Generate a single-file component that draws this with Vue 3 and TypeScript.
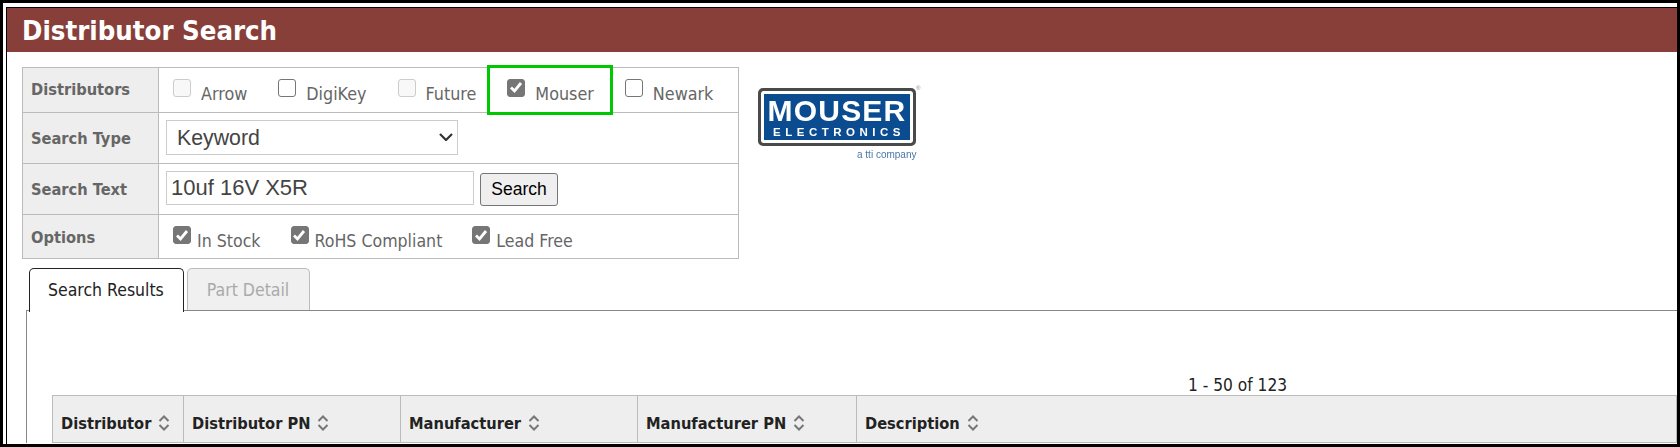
<script setup lang="ts">
interface Check {
  label: string;
  checked?: boolean;
  disabled?: boolean;
  highlight?: boolean;
}

const distributors: Check[] = [
  { label: 'Arrow', disabled: true },
  { label: 'DigiKey' },
  { label: 'Future', disabled: true },
  { label: 'Mouser', checked: true, highlight: true },
  { label: 'Newark' },
];

const options: Check[] = [
  { label: 'In Stock', checked: true },
  { label: 'RoHS Compliant', checked: true },
  { label: 'Lead Free', checked: true },
];

const columns = [
  { label: 'Distributor', width: 131 },
  { label: 'Distributor PN', width: 217 },
  { label: 'Manufacturer', width: 237 },
  { label: 'Manufacturer PN', width: 219 },
  { label: 'Description', width: 0 },
];
</script>

<template>
  <div class="frame">
    <div class="page">
      <div class="inner">
        <h1 class="banner">Distributor Search</h1>

        <div class="top">
          <div class="form">
            <div class="row row-dist">
              <div class="label">Distributors</div>
              <div class="cell dist-cell">
                <label
                  v-for="d in distributors"
                  :key="d.label"
                  class="dist"
                  :class="{ picked: d.highlight }"
                >
                  <span class="box" :class="{ on: d.checked, off: d.disabled }">
                    <svg v-if="d.checked" viewBox="0 0 18 18" width="18" height="18">
                      <path d="M4 9.5 7.5 13 14 5" fill="none" stroke="#fff" stroke-width="2.8" />
                    </svg>
                  </span>
                  <span class="txt">{{ d.label }}</span>
                </label>
              </div>
            </div>
            <div class="row row-type">
              <div class="label">Search Type</div>
              <div class="cell top-cell">
                <div class="select-wrap">
                  <select class="type-select">
                    <option>Keyword</option>
                  </select>
                  <svg class="chevron" viewBox="0 0 14 8" width="14" height="8">
                    <path d="M1 1 7 7 13 1" fill="none" stroke="#333" stroke-width="2.2" />
                  </svg>
                </div>
              </div>
            </div>
            <div class="row row-text">
              <div class="label">Search Text</div>
              <div class="cell top-cell">
                <input class="text-input" type="text" value="10uf 16V X5R" />
                <button class="search-btn">Search</button>
              </div>
            </div>
            <div class="row row-opts">
              <div class="label">Options</div>
              <div class="cell opts-cell">
                <label v-for="o in options" :key="o.label" class="opt">
                  <span class="box on">
                    <svg viewBox="0 0 18 18" width="18" height="18">
                      <path d="M4 9.5 7.5 13 14 5" fill="none" stroke="#fff" stroke-width="2.8" />
                    </svg>
                  </span>
                  <span class="txt">{{ o.label }}</span>
                </label>
              </div>
            </div>
          </div>

          <div class="logo">
            <div class="logo-badge">
              <span class="logo-name">MOUSER</span>
              <span class="logo-sub">ELECTRONICS</span>
            </div>
            <span class="logo-reg">®</span>
            <div class="logo-tag">a tti company</div>
          </div>
        </div>

        <div class="tabs">
          <div class="tab active">Search Results</div>
          <div class="tab">Part Detail</div>
        </div>

        <div class="panel">
          <div class="count">1 - 50 of 123</div>
          <div class="thead">
            <div
              v-for="c in columns"
              :key="c.label"
              class="th"
              :class="{ grow: !c.width }"
              :style="c.width ? { width: c.width + 'px' } : undefined"
            >
              <span>{{ c.label }}</span>
              <svg class="sort" viewBox="0 0 12 16" width="12" height="16">
                <path d="M1.5 6 6 1.5 10.5 6M1.5 10 6 14.5 10.5 10" fill="none" stroke="#777" stroke-width="2" />
              </svg>
            </div>
          </div>
        </div>
      </div>
    </div>
  </div>
</template>

<style>
html,
body {
  margin: 0;
  background: #000;
}
</style>

<style scoped>
.frame {
  box-sizing: border-box;
  width: 1680px;
  height: 447px;
  padding: 3px;
  background: #000;
  overflow: hidden;
}
.page {
  box-sizing: border-box;
  height: 100%;
  background: #fff;
  padding: 4px 0 0 3px;
  overflow: hidden;
  font-family: "DejaVu Sans Condensed", "DejaVu Sans", sans-serif;
  font-stretch: condensed;
  color: #666;
  font-size: 17.5px;
}
.inner {
  height: 100%;
  border-left: 1px solid #000;
  border-top: 1px solid #000;
}
.banner {
  margin: 0;
  height: 44px;
  line-height: 45px;
  padding-left: 15px;
  background: #883f3a;
  color: #fff;
  font-size: 27.3px;
  font-weight: 700;
}
.top {
  display: flex;
  margin: 15px 0 0 15px;
}
.form {
  flex: none;
  width: 717px;
  box-sizing: border-box;
  border: 1px solid #bbb;
}
.row {
  display: flex;
  border-bottom: 1px solid #bbb;
}
.row:last-child {
  border-bottom: 0;
}
.row-dist { height: 44px; }
.row-type { height: 50px; }
.row-text { height: 50px; }
.row-opts { height: 43px; }
.label {
  flex: none;
  width: 136px;
  box-sizing: border-box;
  padding-left: 8px;
  background: #eee;
  border-right: 1px solid #bbb;
  font-size: 16.3px;
  font-weight: 700;
  display: flex;
  align-items: center;
}
.row-dist .label {
  padding-bottom: 2px;
}
.row-opts .label {
  padding-top: 1px;
}
.cell {
  flex: 1;
  min-width: 0;
  display: flex;
  align-items: center;
  padding-left: 7px;
}
.top-cell {
  align-items: flex-start;
  padding-top: 7px;
}
.dist-cell {
  padding-left: 14px;
  align-items: stretch;
  font-size: 17.8px;
}
.dist {
  flex: none;
  display: flex;
  align-items: center;
  gap: 10px;
  margin-right: 31px;
  position: relative;
}
.dist:last-child {
  margin-right: 0;
}
.picked::before {
  content: "";
  position: absolute;
  left: -20px;
  right: -19px;
  top: -3px;
  bottom: -3px;
  border: 3px solid #00c800;
}
.box {
  width: 18px;
  height: 18px;
  box-sizing: border-box;
  border: 1.5px solid #767676;
  border-radius: 3px;
  background: #fff;
  margin-top: -5px;
  display: block;
  flex: none;
}
.box svg {
  display: block;
  margin: -1.5px;
}
.box.off {
  border-color: #ccc;
  background: #f8f8f8;
}
.box.on {
  background: #767676;
  border-color: #767676;
}
.txt {
  margin-top: 7px;
}
.select-wrap {
  position: relative;
  width: 292px;
  height: 35px;
}
.type-select {
  appearance: none;
  width: 100%;
  height: 100%;
  box-sizing: border-box;
  border: 1px solid #ccc;
  border-radius: 0;
  background: #fff;
  padding: 0 0 0 10px;
  color: #444;
  font: 21.3px "Liberation Sans", Arial, sans-serif;
}
.chevron {
  position: absolute;
  left: 273px;
  top: 13px;
  pointer-events: none;
}
.text-input {
  width: 308px;
  height: 34px;
  box-sizing: border-box;
  border: 1px solid #ccc;
  padding: 0 4px;
  color: #444;
  font: 22px "Liberation Sans", Arial, sans-serif;
  outline: none;
}
.search-btn {
  width: 78px;
  height: 33px;
  margin: 2px 0 0 6px;
  border: 1px solid #767676;
  border-radius: 3px;
  background: #efefef;
  color: #000;
  font: 17.5px "Liberation Sans", Arial, sans-serif;
  padding: 0;
}
.opts-cell {
  padding-left: 14px;
  font-size: 17.6px;
}
.opt {
  display: flex;
  align-items: center;
  gap: 6px;
  margin-right: 30px;
}
.opt .box {
  margin-top: -3px;
}
.opt .txt {
  margin-top: 8px;
}
.logo {
  position: relative;
  margin: 21px 0 0 19px;
  width: 160px;
}
.logo-badge {
  width: 158px;
  height: 58px;
  box-sizing: border-box;
  border: 3px solid #4a4a4a;
  border-radius: 5px;
  background: #0a4c8f;
  box-shadow: inset 0 0 0 3px #fff;
  display: flex;
  flex-direction: column;
  align-items: center;
  justify-content: center;
  color: #fff;
  font-family: "Liberation Sans", Arial, sans-serif;
  font-weight: 700;
  line-height: 1;
  filter: blur(0.4px);
}
.logo-name {
  font-size: 30px;
  letter-spacing: 1.2px;
}
.logo-sub {
  font-size: 11.5px;
  letter-spacing: 4.5px;
  margin-right: -4px;
  margin-top: 1px;
}
.logo-reg {
  position: absolute;
  left: 158px;
  top: -3px;
  font: 6px "Liberation Sans", Arial, sans-serif;
  color: #888;
}
.logo-tag {
  margin: 3px 0 0 99px;
  color: #4b78a8;
  font: 10px "Liberation Sans", Arial, sans-serif;
  white-space: nowrap;
  filter: blur(0.3px);
}
.tabs {
  display: flex;
  gap: 3px;
  margin: 9px 0 0 22px;
  height: 42px;
  position: relative;
  z-index: 1;
}
.tab {
  box-sizing: border-box;
  height: 42px;
  padding: 0 20px 0 19px;
  display: flex;
  align-items: center;
  border: 1px solid #bbb;
  border-bottom: 0;
  border-radius: 5px 5px 0 0;
  background: #f0f0f0;
  color: #aaa;
}
.tab.active {
  border-color: #222;
  background: #fff;
  color: #222;
  height: 44px;
  padding: 0 19px 2px 18px;
}
.panel {
  margin-left: 19px;
  border-top: 1px solid #888;
  border-left: 1px solid #888;
  padding: 66px 0 0 25px;
}
.count {
  text-align: center;
  width: 2371px;
  height: 18px;
  line-height: 16px;
  font-size: 17.2px;
  color: #222;
}
.thead {
  display: flex;
  height: 48px;
  box-sizing: border-box;
  border: 1px solid #bbb;
  background: #eee;
  color: #222;
  font-size: 16.3px;
  font-weight: 700;
}
.th {
  box-sizing: border-box;
  flex: none;
  display: flex;
  align-items: center;
  gap: 7px;
  padding: 8px 0 0 8px;
  border-right: 1px solid #bbb;
}
.th.grow {
  flex: 1;
  border-right: 0;
}
</style>
